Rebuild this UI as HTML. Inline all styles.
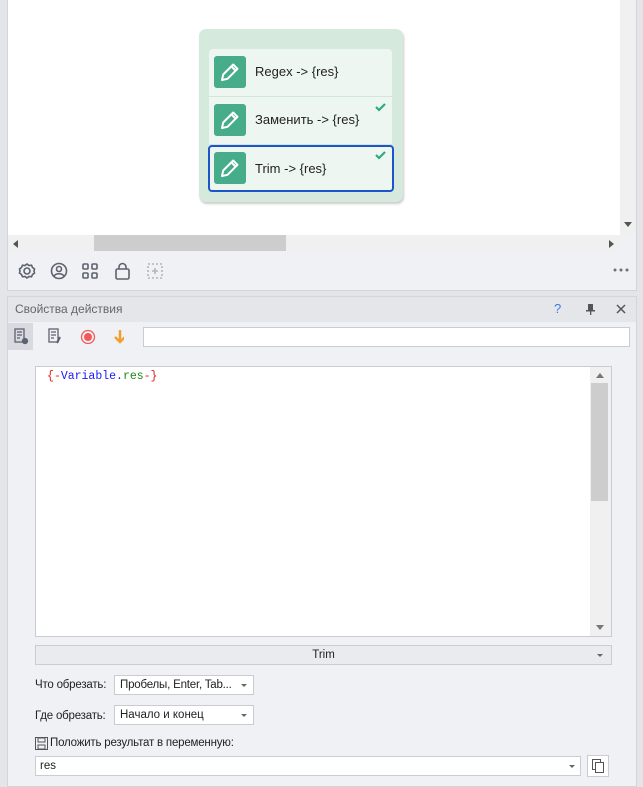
<!DOCTYPE html>
<html><head><meta charset="utf-8"><style>
*{box-sizing:border-box;margin:0;padding:0}
body{width:643px;height:787px;background:#e3e5e9;font-family:"Liberation Sans",sans-serif;font-size:11.5px;color:#222;position:relative;overflow:hidden}
.abs{position:absolute}
</style></head><body>
<div class="abs" style="left:7px;top:0;width:630px;height:291px;background:#f0f1f5;border:1px solid #d3d5da;border-top:none"></div>
<div class="abs" style="left:8px;top:0;width:612px;height:235px;background:#fff"></div>
<div class="abs" style="left:620px;top:0;width:16px;height:235px;background:#f0f0f0"></div>
<div class="abs" style="left:624px;top:222px;width:0;height:0;border-left:4px solid transparent;border-right:4px solid transparent;border-top:5px solid #555"></div>
<div class="abs" style="left:8px;top:235px;width:612px;height:16px;background:#f0f0f0"></div>
<div class="abs" style="left:94px;top:235px;width:192px;height:16px;background:#cdcdcd"></div>
<div class="abs" style="left:13px;top:240px;border-top:4px solid transparent;border-bottom:4px solid transparent;border-right:5px solid #555"></div>
<div class="abs" style="left:609px;top:240px;border-top:4px solid transparent;border-bottom:4px solid transparent;border-left:5px solid #555"></div>
<div class="abs" style="left:199px;top:29px;width:204px;height:173px;background:#d5eadc;border-radius:7px;box-shadow:1px 2px 2px #ccc"></div>
<div class="abs" style="left:209px;top:49px;width:183px;height:142px;background:#eef6f1;border-radius:4px"></div>
<div class="abs" style="left:209px;top:96px;width:183px;height:1px;background:#d3e6da"></div>
<div class="abs" style="left:209px;top:144px;width:183px;height:1px;background:#d3e6da"></div>
<div class="abs" style="left:208px;top:145px;width:186px;height:47px;border:2px solid #1c55c9;border-radius:4px"></div>
<svg class="abs" style="left:214px;top:56px" width="32" height="32"><rect width="32" height="32" rx="3" fill="#47ac89"/><path d="M8 24l1.2-5.5 10-10 4.3 4.3-10 10z M17.5 10.5l4 4" stroke="#fff" stroke-width="2" fill="none" stroke-linejoin="round"/></svg>
<svg class="abs" style="left:214px;top:104px" width="32" height="32"><rect width="32" height="32" rx="3" fill="#47ac89"/><path d="M8 24l1.2-5.5 10-10 4.3 4.3-10 10z M17.5 10.5l4 4" stroke="#fff" stroke-width="2" fill="none" stroke-linejoin="round"/></svg>
<svg class="abs" style="left:214px;top:152px" width="32" height="32"><rect width="32" height="32" rx="3" fill="#47ac89"/><path d="M8 24l1.2-5.5 10-10 4.3 4.3-10 10z M17.5 10.5l4 4" stroke="#fff" stroke-width="2" fill="none" stroke-linejoin="round"/></svg>
<div class="abs" style="left:255px;top:64px;font-size:13px">Regex -&gt; {res}</div>
<div class="abs" style="left:255px;top:112px;font-size:13px">Заменить -&gt; {res}</div>
<div class="abs" style="left:255px;top:161px;font-size:13px">Trim -&gt; {res}</div>
<svg class="abs" style="left:375px;top:102px" width="12" height="10"><path d="M1 5l3 3 6-6" stroke="#2faa7e" stroke-width="2.2" fill="none"/></svg>
<svg class="abs" style="left:375px;top:150px" width="12" height="10"><path d="M1 5l3 3 6-6" stroke="#2faa7e" stroke-width="2.2" fill="none"/></svg>
<svg class="abs" style="left:18px;top:262px" width="160" height="18" fill="none" stroke="#5c6270" stroke-width="1.6">
<circle cx="9" cy="9" r="3"/><path d="M9 2l2 1.5 2.5-.3 1 2.3 2 1.5-.5 2 .5 2-2 1.5-1 2.3-2.5-.3L9 16l-2-1.5-2.5.3-1-2.3-2-1.5.5-2-.5-2 2-1.5 1-2.3 2.5.3z"/>
<circle cx="41" cy="9" r="7.5"/><circle cx="41" cy="7" r="2.5"/><path d="M36 14c2-3 8-3 10 0"/>
<rect x="65" y="2" width="5" height="5" rx="1"/><rect x="74" y="2" width="5" height="5" rx="1"/><rect x="65" y="11" width="5" height="5" rx="1"/><rect x="74" y="11" width="5" height="5" rx="1"/>
<rect x="98" y="7" width="13" height="10" rx="1.5"/><path d="M101 7V5a3.5 3.5 0 0 1 7 0v2"/>
<rect x="130" y="2" width="14" height="14" stroke="#b0b5c0" stroke-dasharray="2 2"/><path d="M137 6v6M134 9h6" stroke="#b0b5c0"/>
</svg>
<svg class="abs" style="left:613px;top:268px" width="16" height="4" fill="#6a707c"><circle cx="2" cy="2" r="1.5"/><circle cx="8" cy="2" r="1.5"/><circle cx="14" cy="2" r="1.5"/></svg>
<div class="abs" style="left:7px;top:296px;width:630px;height:491px;background:#f0f1f5;border:1px solid #d3d5da"></div>
<div class="abs" style="left:8px;top:297px;width:628px;height:25px;background:#e4e6ea"></div>
<div class="abs" style="left:15px;top:302px;color:#666;font-size:12px">Свойства действия</div>
<div class="abs" style="left:554px;top:301px;color:#3a7de0;font-size:13px">?</div>
<svg class="abs" style="left:585px;top:303px" width="12" height="14" fill="#555"><rect x="3" y="1" width="5" height="7"/><rect x="1" y="7" width="9" height="1.5"/><rect x="5" y="8" width="1.3" height="4"/></svg>
<svg class="abs" style="left:616px;top:304px" width="10" height="10" stroke="#555" stroke-width="1.5"><path d="M1 1l8 8M9 1L1 9"/></svg>
<div class="abs" style="left:8px;top:323px;width:25px;height:27px;background:#d8dadf"></div>
<svg class="abs" style="left:14px;top:328px" width="110" height="18" fill="none" stroke="#5c6270" stroke-width="1.3">
<rect x="1" y="1" width="9" height="13"/><path d="M3 4h5M3 7h5M3 10h3"/><circle cx="11" cy="13" r="2.5" fill="#5c6270"/>
<rect x="35" y="1" width="9" height="13"/><path d="M37 4h5M37 7h5M37 10h3"/><path d="M46 9l-3 6" stroke-width="2"/>
<circle cx="74" cy="9" r="6.5" stroke="#f05a5a"/><circle cx="74" cy="9" r="4" fill="#f05a5a" stroke="none"/>
<path d="M106 2v12M101 9l5 5 5-5" stroke="#f0a030" stroke-width="2.5"/>
</svg>
<div class="abs" style="left:143px;top:327px;width:487px;height:20px;background:#fff;border:1px solid #c9ccd2"></div>
<div class="abs" style="left:35px;top:366px;width:577px;height:271px;background:#fff;border:1px solid #c9ccd2"></div>
<div class="abs" style="left:590px;top:367px;width:21px;height:269px;background:#f0f0f0"></div>
<div class="abs" style="left:591px;top:383px;width:17px;height:118px;background:#cdcdcd"></div>
<div class="abs" style="left:596px;top:373px;border-left:4px solid transparent;border-right:4px solid transparent;border-bottom:5px solid #777"></div>
<div class="abs" style="left:596px;top:625px;border-left:4px solid transparent;border-right:4px solid transparent;border-top:5px solid #777"></div>
<div class="abs" style="left:47px;top:370px;font-family:'Liberation Mono',monospace;font-size:11.5px"><span style="color:#e02020">{-</span><span style="color:#1a1aff">Variable</span><span style="color:#1a1aff">.</span><span style="color:#1a8a1a">res</span><span style="color:#e02020">-}</span></div>
<div class="abs" style="left:35px;top:645px;width:577px;height:20px;background:#eaebef;border:1px solid #c9ccd2;text-align:center;line-height:18px">Trim</div>
<div class="abs" style="left:597px;top:654px;border-left:3px solid transparent;border-right:3px solid transparent;border-top:3px solid #666"></div>
<div class="abs" style="left:35px;top:679px;letter-spacing:-0.2px">Что обрезать:</div>
<div class="abs" style="left:114px;top:675px;width:140px;height:20px;background:#fff;border:1px solid #c9ccd2;padding:3px 0 0 5px;letter-spacing:-0.2px">Пробелы, Enter, Tab...</div>
<div class="abs" style="left:241px;top:684px;border-left:3px solid transparent;border-right:3px solid transparent;border-top:3px solid #666"></div>
<div class="abs" style="left:35px;top:710px;letter-spacing:-0.2px">Где обрезать:</div>
<div class="abs" style="left:114px;top:705px;width:140px;height:20px;background:#fff;border:1px solid #c9ccd2;padding:3px 0 0 5px">Начало и конец</div>
<div class="abs" style="left:241px;top:714px;border-left:3px solid transparent;border-right:3px solid transparent;border-top:3px solid #666"></div>
<svg class="abs" style="left:35px;top:737px" width="13" height="13" fill="none" stroke="#555"><rect x="0.5" y="0.5" width="12" height="12"/><rect x="3" y="1" width="7" height="4"/><rect x="3" y="8" width="7" height="4"/></svg>
<div class="abs" style="left:50px;top:737px;letter-spacing:-0.2px">Положить результат в переменную:</div>
<div class="abs" style="left:35px;top:756px;width:546px;height:20px;background:#fff;border:1px solid #c9ccd2;padding:3px 0 0 4px">res</div>
<div class="abs" style="left:569px;top:765px;border-left:3px solid transparent;border-right:3px solid transparent;border-top:3px solid #666"></div>
<div class="abs" style="left:587px;top:755px;width:22px;height:22px;background:#fff;border:1px solid #c9ccd2"></div>
<svg class="abs" style="left:591px;top:758px" width="14" height="16" fill="#fff" stroke="#555"><rect x="1.5" y="1.5" width="8" height="10"/><rect x="4.5" y="4.5" width="8" height="10"/></svg>
</body></html>
